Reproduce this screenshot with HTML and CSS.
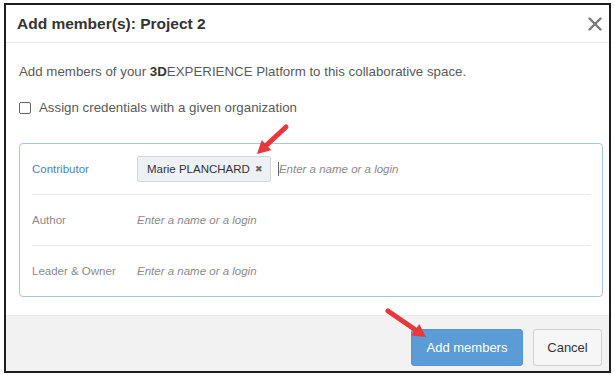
FILE: index.html
```html
<!DOCTYPE html>
<html lang="en">
<head>
    <meta charset="UTF-8">
    <meta name="viewport" content="width=device-width, initial-scale=1.0">
    <title>Add member(s)</title>
    <link rel="stylesheet" href="styles.css">
</head>
<body>
    <div class="dialog">
        <div class="dialog-header">
            <h1>Add member(s): Project 2</h1>
            <svg class="close" width="14" height="14" viewBox="0 0 14 14">
                <path d="M1.5 1.5 L12.5 12.5 M12.5 1.5 L1.5 12.5" stroke="#7a7a7a" stroke-width="2.4" stroke-linecap="round"/>
            </svg>
        </div>

        <div class="dialog-body">
            <p class="intro">Add members of your <b>3D</b>EXPERIENCE Platform to this collaborative space.</p>
            <label class="check-row">
                <span class="checkbox"></span>
                Assign credentials with a given organization
            </label>

            <div class="members-box">
                <div class="member-row">
                    <span class="role active">Contributor</span>
                    <div class="field">
                        <span class="chip">Marie PLANCHARD <span class="chip-x">&#10006;</span></span>
                        <span class="caret"></span>
                        <span class="placeholder">Enter a name or a login</span>
                    </div>
                </div>
                <div class="member-row">
                    <span class="role">Author</span>
                    <div class="field">
                        <span class="placeholder">Enter a name or a login</span>
                    </div>
                </div>
                <div class="member-row">
                    <span class="role">Leader &amp; Owner</span>
                    <div class="field">
                        <span class="placeholder">Enter a name or a login</span>
                    </div>
                </div>
            </div>
        </div>

        <div class="dialog-footer">
            <button class="btn btn-primary">Add members</button>
            <button class="btn btn-default">Cancel</button>
        </div>
    </div>

    <!-- annotation arrows drawn over the screenshot -->
    <svg class="arrows" width="615" height="375" viewBox="0 0 615 375">
        <line x1="286" y1="127" x2="266.5" y2="145.1" stroke="#e8383b" stroke-width="5" stroke-linecap="round"/>
        <polygon points="257,154 271.3,150.2 261.7,140" fill="#e8383b"/>
        <line x1="388" y1="311" x2="415.3" y2="329.7" stroke="#e8383b" stroke-width="5" stroke-linecap="round"/>
        <polygon points="426,337 411.3,335.5 419.3,323.9" fill="#e8383b"/>
    </svg>
</body>
</html>
```

FILE: styles.css
```css
body {
    font-family: 'Liberation Sans', Arial, sans-serif;
    margin: 0;
    padding: 0;
    background-color: white;
    color: #5a5a5a;
}

.dialog {
    box-sizing: border-box;
    width: 607px;
    height: 370px;
    margin: 3px 0 0 4px;
    border: 2px solid #1e1e1e;
    background: white;
    display: flex;
    flex-direction: column;
}

.dialog-header {
    height: 37px;
    display: flex;
    align-items: center;
    justify-content: space-between;
    padding: 0 7px 0 11px;
    border-bottom: 1px solid #e8e8e8;
}

.dialog-header h1 {
    margin: 0;
    font-size: 15.5px;
    font-weight: bold;
    color: #333;
}

.dialog-body {
    flex: 1;
    padding: 21px 6px 0 13px;
}

.intro {
    margin: 0;
    font-size: 13.3px;
    line-height: 16px;
}

.intro b {
    color: #333;
}

.check-row {
    display: flex;
    align-items: center;
    gap: 8px;
    margin-top: 20px;
    font-size: 13.3px;
    line-height: 16px;
}

.checkbox {
    width: 10px;
    height: 10px;
    border: 1px solid #666;
    border-radius: 2px;
    background: white;
}

.members-box {
    margin-top: 27px;
    border: 1px solid #a8c3dc;
    border-radius: 4px;
    padding: 0 11px 0 12px;
}

.member-row {
    height: 50px;
    display: flex;
    align-items: center;
    border-bottom: 1px solid #e8e8e8;
}

.member-row:last-child {
    border-bottom: none;
}

.role {
    width: 105px;
    font-size: 11.5px;
    color: #8a8a8a;
}

.role.active {
    color: #4a84bf;
}

.field {
    display: flex;
    align-items: center;
}

.chip {
    box-sizing: border-box;
    height: 26px;
    display: flex;
    align-items: center;
    padding: 0 7px 0 9px;
    background: #eef1f4;
    border: 1px solid #d4d8dc;
    border-radius: 2px;
    font-size: 11.5px;
    color: #333;
}

.chip-x {
    margin-left: 5px;
    font-size: 9px;
    color: #666;
}

.caret {
    width: 1px;
    height: 14px;
    background: #666;
    margin-left: 7px;
}

.placeholder {
    font-size: 11.5px;
    font-style: italic;
    color: #8a8a8a;
}

.dialog-footer {
    height: 42px;
    padding: 13px 7px 0 0;
    background: #f2f2f2;
    border-top: 1px solid #ececec;
    display: flex;
    justify-content: flex-end;
    gap: 10px;
}

.btn {
    height: 37px;
    font-family: inherit;
    font-size: 13px;
    border-radius: 3px;
    cursor: pointer;
}

.btn-primary {
    width: 112px;
    background-color: #5b9bd6;
    border: 1px solid #5596d2;
    color: white;
}

.btn-default {
    width: 69px;
    background-color: #f6f6f6;
    border: 1px solid #cfcfcf;
    color: #333;
}

.arrows {
    position: absolute;
    top: 0;
    left: 0;
    pointer-events: none;
}
```
